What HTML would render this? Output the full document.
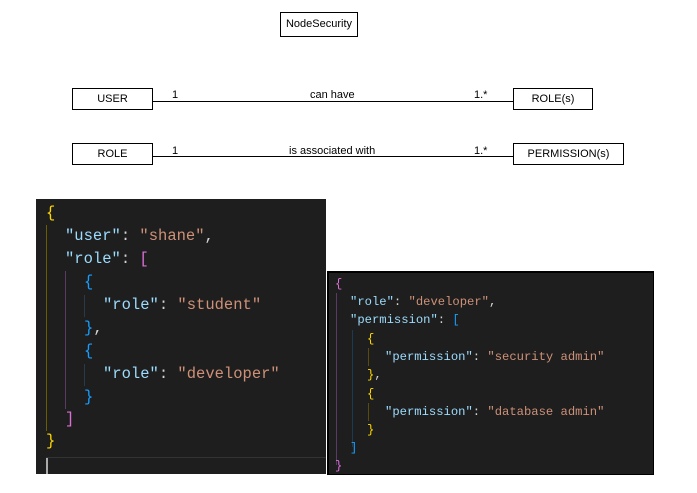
<!DOCTYPE html>
<html><head><meta charset="utf-8"><style>
body{margin:0;width:697px;height:493px;background:#fff;position:relative;overflow:hidden;font-family:"Liberation Sans",sans-serif}
.b{position:absolute;border:1px solid #000;box-sizing:border-box;font-size:11px;text-align:center;color:#000}
.t{position:absolute;font-size:11px;color:#000}
.l{position:absolute;height:1px;background:#000}
.p{position:absolute;background:#1e1e1e;font-family:"Liberation Mono",monospace;white-space:pre;color:#d4d4d4}
.p div{position:absolute;left:0}
.k{color:#9cdcfe}.s{color:#ce9178}.y{color:#ffd700}.m{color:#da70d6}.c{color:#179fff}
.g{position:absolute;width:1px}
</style></head><body>
<div class="b" style="left:280px;top:12px;width:78px;height:25px;line-height:23px">NodeSecurity</div>
<div class="b" style="left:72px;top:88px;width:81px;height:22px;line-height:20px">USER</div>
<div class="b" style="left:513px;top:88px;width:80px;height:22px;line-height:20px">ROLE(s)</div>
<div class="l" style="left:153px;top:101px;width:360px"></div>
<div class="t" style="left:172px;top:89px">1</div>
<div class="t" style="left:310px;top:89px">can have</div>
<div class="t" style="left:474px;top:89px">1.*</div>
<div class="b" style="left:72px;top:143px;width:81px;height:22px;line-height:20px">ROLE</div>
<div class="b" style="left:513px;top:143px;width:111px;height:22px;line-height:20px">PERMISSION(s)</div>
<div class="l" style="left:153px;top:156px;width:360px"></div>
<div class="t" style="left:172px;top:145px">1</div>
<div class="t" style="left:289px;top:145px">is associated with</div>
<div class="t" style="left:474px;top:145px">1.*</div>

<div class="p" style="left:36px;top:199px;width:290px;height:275px;font-size:15.5px;line-height:23px">
<div class="g" style="left:10px;top:26px;height:206px;background:#6b5c00"></div>
<div class="g" style="left:29px;top:72px;height:138px;background:#5a3a66"></div>
<div class="g" style="left:48px;top:96px;height:22px;background:#2a3a4a"></div>
<div class="g" style="left:48px;top:165px;height:22px;background:#2a3a4a"></div>
<div style="top:3px;left:10px"><span class="y">{</span></div>
<div style="top:26px;left:29px"><span class="k">"user"</span>: <span class="s">"shane"</span>,</div>
<div style="top:49px;left:29px"><span class="k">"role"</span>: <span class="m">[</span></div>
<div style="top:72px;left:48px"><span class="c">{</span></div>
<div style="top:95px;left:67px"><span class="k">"role"</span>: <span class="s">"student"</span></div>
<div style="top:118px;left:48px"><span class="c">}</span>,</div>
<div style="top:141px;left:48px"><span class="c">{</span></div>
<div style="top:164px;left:67px"><span class="k">"role"</span>: <span class="s">"developer"</span></div>
<div style="top:187px;left:48px"><span class="c">}</span></div>
<div style="top:209px;left:29px"><span class="m">]</span></div>
<div style="top:231px;left:10px"><span class="y">}</span></div>
<div style="top:258px;left:10px;width:280px;height:1px;background:#333"></div>
<div style="top:259px;left:10px;width:2px;height:16px;background:#aaa"></div>
</div>

<div style="position:absolute;left:327px;top:271px;width:327px;height:204px;background:#000"></div>
<div class="p" style="left:329px;top:273px;width:324px;height:201px;font-size:12.2px;line-height:18.3px">
<div class="g" style="left:7px;top:20px;height:172px;background:#5a3a66"></div>
<div class="g" style="left:23px;top:57px;height:117px;background:#1d3a55"></div>
<div class="g" style="left:39px;top:75px;height:18px;background:#5a4a10"></div>
<div class="g" style="left:39px;top:130px;height:18px;background:#5a4a10"></div>
<div style="top:2px;left:6px"><span class="m">{</span></div>
<div style="top:20px;left:21px"><span class="k">"role"</span>: <span class="s">"developer"</span>,</div>
<div style="top:38px;left:21px"><span class="k">"permission"</span>: <span class="c">[</span></div>
<div style="top:57px;left:38px"><span class="y">{</span></div>
<div style="top:75px;left:56px"><span class="k">"permission"</span>: <span class="s">"security admin"</span></div>
<div style="top:93px;left:38px"><span class="y">}</span>,</div>
<div style="top:112px;left:38px"><span class="y">{</span></div>
<div style="top:130px;left:56px"><span class="k">"permission"</span>: <span class="s">"database admin"</span></div>
<div style="top:148px;left:38px"><span class="y">}</span></div>
<div style="top:166px;left:21px"><span class="c">]</span></div>
<div style="top:184px;left:6px"><span class="m">}</span></div>
</div>
</body></html>
